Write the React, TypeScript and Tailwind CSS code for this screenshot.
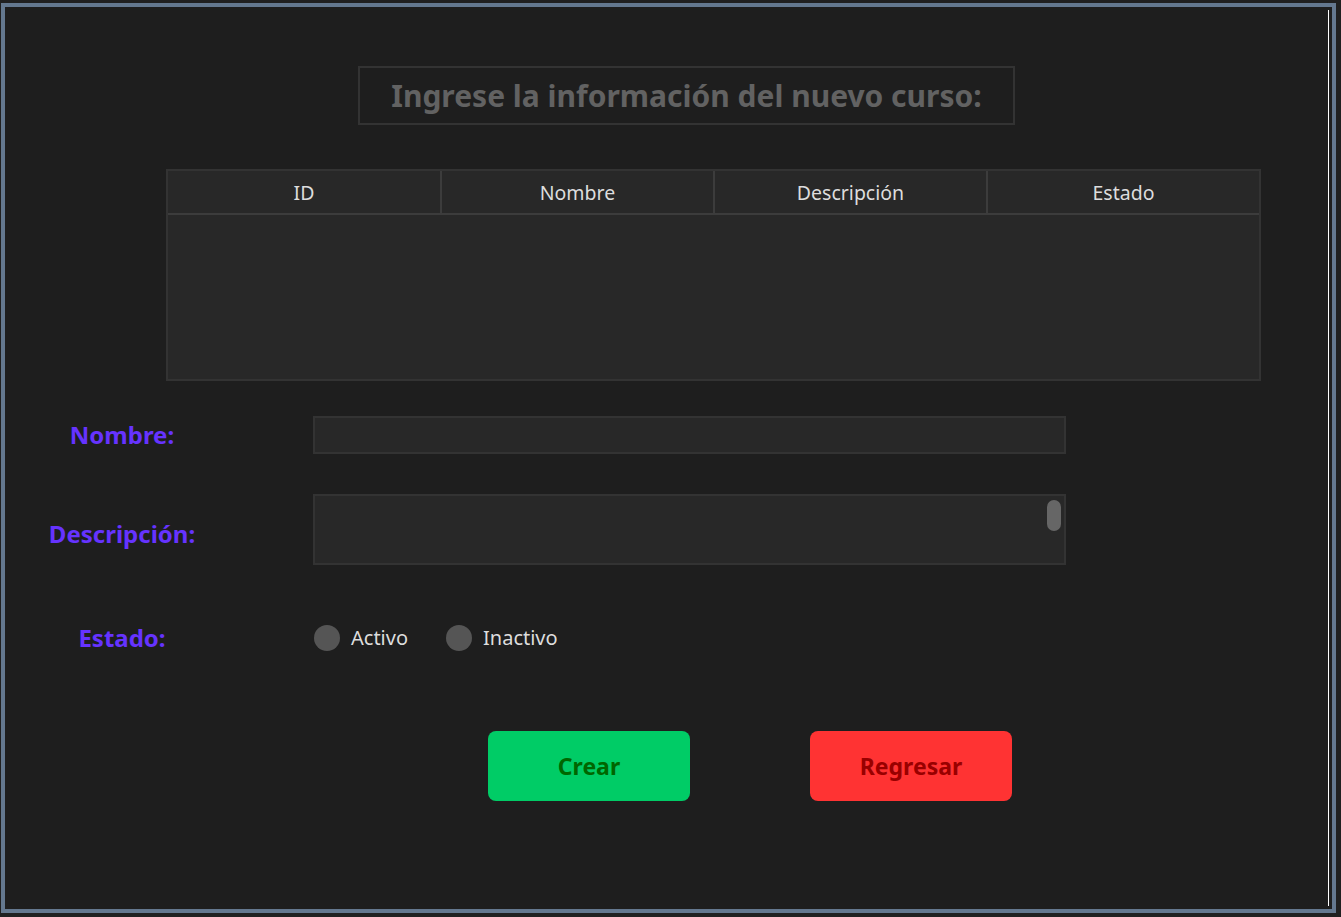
import React from "react";

const font = { fontFamily: '"Noto Sans", "Open Sans", sans-serif' };

const columns = ["ID", "Nombre", "Descripción", "Estado"];

const Radio = ({ label }: { label: string }) => (
  <label className="flex items-center gap-[11px] cursor-pointer">
    <span className="w-[26px] h-[26px] rounded-full bg-[#555555]" />
    <span className="text-[20px] text-[#dddddd] leading-none">{label}</span>
  </label>
);

const FieldLabel = ({ children, className = "" }: { children: React.ReactNode; className?: string }) => (
  <div className={"w-[234px] text-center text-[24px] font-bold text-[#6633ff] leading-none " + className}>
    {children}
  </div>
);

export default function App() {
  return (
    <div className="w-screen h-screen bg-[#202020] pt-[3px] pl-[1px] pr-[5px] pb-[4px]" style={font}>
      <div className="h-full border-4 border-[#64788f] bg-[#1e1e1e] py-[3px] pr-[3px]">
        <div className="h-full border-r border-white flex flex-col">
          {/* title */}
          <div className="ml-[353px] mt-[56px] w-[657px] h-[59px] border-2 border-[#333333] flex items-center justify-center">
            <h1 className="text-[30px] font-bold text-[#626262] leading-none">
              Ingrese la información del nuevo curso:
            </h1>
          </div>

          {/* table */}
          <div className="ml-[161px] mt-[44px] w-[1095px] h-[212px] border-2 border-[#333333] bg-[#282828] flex flex-col">
            <div className="h-[44px] grid grid-cols-[274px_273px_273px_1fr] border-b-2 border-[#3c3c3c]">
              {columns.map((c, i) => (
                <div
                  key={c}
                  className={
                    "flex items-center justify-center pt-[1px] text-[19.5px] text-[#dddddd] " +
                    (i < columns.length - 1 ? "border-r-2 border-[#3c3c3c]" : "")
                  }
                >
                  {c}
                </div>
              ))}
            </div>
            <div className="flex-1" />
          </div>

          {/* nombre */}
          <div className="mt-[35px] flex items-center">
            <FieldLabel>Nombre:</FieldLabel>
            <input
              type="text"
              className="ml-[74px] w-[753px] h-[38px] bg-[#282828] border-2 border-[#333333] outline-none text-[#dddddd] px-2"
            />
          </div>

          {/* descripcion */}
          <div className="mt-[40px] flex items-center">
            <FieldLabel className="pt-[8px]">Descripción:</FieldLabel>
            <div className="relative ml-[74px] w-[753px] h-[71px] bg-[#282828] border-2 border-[#333333]">
              <div className="absolute right-[3px] top-[4px] w-[14px] h-[31px] rounded-full bg-[#666666]" />
            </div>
          </div>

          {/* estado */}
          <div className="mt-[60px] flex items-center">
            <FieldLabel>Estado:</FieldLabel>
            <div className="ml-[75px] flex items-center gap-[38px]">
              <Radio label="Activo" />
              <Radio label="Inactivo" />
            </div>
          </div>

          {/* buttons */}
          <div className="mt-[80px] ml-[483px] flex gap-[120px]">
            <button className="w-[202px] h-[70px] rounded-[8px] bg-[#00cc66] text-[23px] font-bold text-[#006600]">
              Crear
            </button>
            <button className="w-[202px] h-[70px] rounded-[8px] bg-[#ff3333] text-[23px] font-bold text-[#990000]">
              Regresar
            </button>
          </div>
        </div>
      </div>
    </div>
  );
}
